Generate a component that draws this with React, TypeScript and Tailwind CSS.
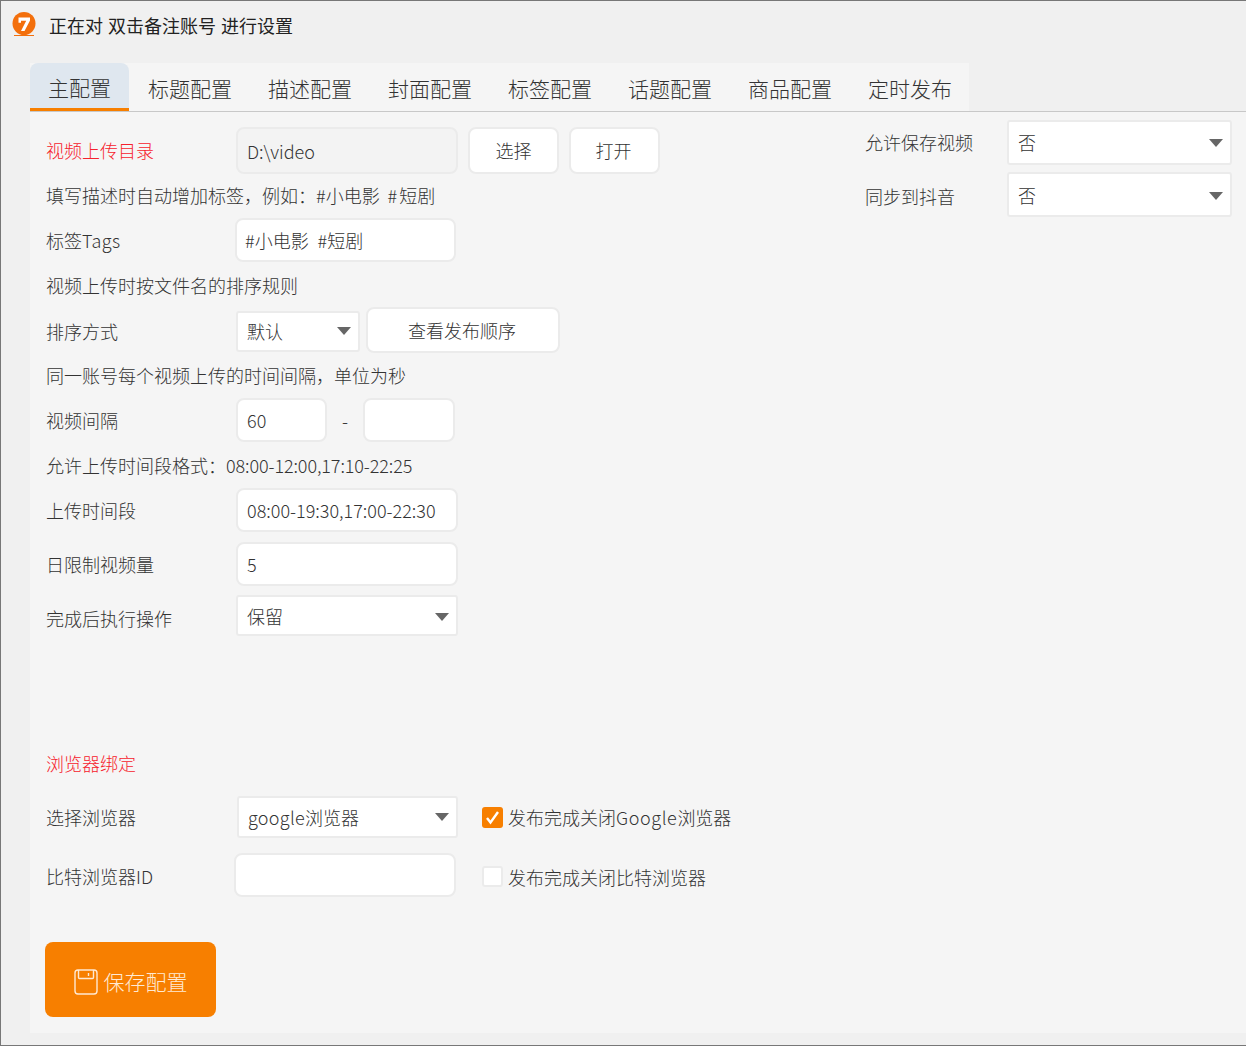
import type { ReactNode } from 'react';

const tabs = ['主配置', '标题配置', '描述配置', '封面配置', '标签配置', '话题配置', '商品配置', '定时发布'];

const fieldClass =
  'h-full rounded-lg border-2 border-[#ebebeb] pl-[9px] pr-[8px] text-[18px] font-light text-[#333333] outline-none';

function Caret() {
  return (
    <svg width="16" height="10" viewBox="0 0 16 10" className="shrink-0">
      <path d="M1 1h14L8 9z" fill="#666666" />
    </svg>
  );
}

function Select({ value, className }: { value: ReactNode; className: string }) {
  return (
    <div
      className={`flex items-center justify-between rounded-[3px] border-2 border-[#ebebeb] bg-white pl-[9px] pr-[6px] text-[18px] font-light text-[#333333] ${className}`}
    >
      <span>{value}</span>
      <Caret />
    </div>
  );
}

function Button({ label, className }: { label: string; className: string }) {
  return (
    <button className={`h-full rounded-lg border-2 border-[#ebebeb] bg-white text-[18px] font-light text-[#333333] ${className}`}>
      {label}
    </button>
  );
}

function Hint({ children, className }: { children?: ReactNode; className: string }) {
  return <div className={`flex h-6 items-center whitespace-pre pb-[2px] text-[18px] font-light text-[#333333] ${className}`}>{children}</div>;
}

function Label({ children, red, className = '' }: { children: ReactNode; red?: boolean; className?: string }) {
  return (
    <div className={`w-[191px] shrink-0 pl-px text-[18px] font-light ${red ? 'text-[#f5222d]' : 'text-[#333333]'} ${className}`}>
      {children}
    </div>
  );
}

function Logo() {
  return (
    <svg width="26" height="26" viewBox="0 0 26 26" className="shrink-0">
      <circle cx="12" cy="11.5" r="11.5" fill="#f36f0c" />
      <path d="M2 23.5h20" stroke="#f36f0c" strokeWidth="1" />
      <path d="M6.5 5.5H18v3L12.5 19H9l5.2-10.2H9v2H6.5z" fill="#ffffff" />
    </svg>
  );
}

function SaveIcon() {
  return (
    <svg width="24" height="26" viewBox="0 0 24 26" fill="none" stroke="#ffe9d2" strokeWidth="1.4" className="shrink-0">
      <rect x="1" y="1" width="22" height="24" rx="3" />
      <path d="M4.5 1v7.5a1 1 0 0 0 1 1h13a1 1 0 0 0 1-1V1" />
      <path d="M14.5 4v3" />
    </svg>
  );
}

export default function App() {
  return (
    <div className="h-[1046px] w-[1246px] overflow-hidden border-b border-l border-t border-[#777777] bg-[#f0f0f0] font-['Noto_Sans_CJK_SC',sans-serif]">
      <div className="flex h-[62px] items-start pl-[11px] pt-[11px]">
        <Logo />
        <span className="ml-[11px] text-[18px] leading-[26px] text-[#222222] [word-spacing:1px]">正在对 双击备注账号 进行设置</span>
      </div>

      <div className="ml-[29px] h-[970px] bg-[#f5f5f5]">
        <div className="relative flex h-[49px] border-b border-[#c8c8c8] bg-[#f0f0f0]">
          <div className="flex bg-[#f5f5f5]">
            {tabs.map((tab, i) => (
              <div
                key={tab}
                className={`flex h-[48px] items-center pt-[4px] text-[21px] font-light text-[#333333] ${
                  i === 0 ? 'rounded-t-lg border-b-[3px] border-[#f77f00] bg-[#dfe7ef] px-[18px]' : 'pl-[19px] pr-[17px]'
                }`}
              >
                {tab}
              </div>
            ))}
          </div>
        </div>

        <div className="flex">
          <div className="w-[835px] shrink-0 pl-[15px]">
            <div className="mt-[15px] flex h-[47px] items-center">
              <Label red>视频上传目录</Label>
              <input readOnly defaultValue="D:\video" className={`${fieldClass} h-[45px] w-[222px] bg-[#f3f3f3]`} />
              <Button label="选择" className="ml-[10px] w-[91px]" />
              <Button label="打开" className="ml-[10px] w-[91px] pr-[2px]" />
            </div>
            <Hint className="mt-[10px] pl-px [word-spacing:4px]">
              填写描述时自动增加标签，例如：#小电影 <span className="tracking-[2px]">#</span>短剧
            </Hint>
            <div className="mt-[10px] flex h-[44px] items-center">
              <Label>
                标签<span className="tracking-[0.5px]">Tags</span>
              </Label>
              <input readOnly defaultValue="#小电影 #短剧" className={`${fieldClass} -ml-px w-[221px] bg-white !pl-[8px] [word-spacing:5px]`} />
            </div>
            <Hint className="mt-[12px] pl-px">视频上传时按文件名的排序规则</Hint>
            <div className="mt-[9px] flex h-[46px] items-center">
              <Label className="pt-[2px]">排序方式</Label>
              <Select value="默认" className="mt-[2px] h-[41px] w-[124px]" />
              <Button label="查看发布顺序" className="ml-[6px] w-[194px] pr-[2px]" />
            </div>
            <Hint className="mt-[11px] pl-px">同一账号每个视频上传的时间间隔，单位为秒</Hint>
            <div className="mt-[10px] flex h-[44px] items-center">
              <Label>视频间隔</Label>
              <input readOnly defaultValue="60" className={`${fieldClass} w-[91px] bg-white`} />
              <span className="w-[36px] text-center text-[18px] font-light text-[#333333]">-</span>
              <input readOnly className={`${fieldClass} w-[92px] bg-white`} />
            </div>
            <Hint className="mt-[12px] pl-px">
              允许上传时间段格式：<span className="tracking-[-0.1px]">08:00-12:00,17:10-22:25</span>
            </Hint>
            <div className="mt-[10px] flex h-[44px] items-center">
              <Label>上传时间段</Label>
              <input readOnly defaultValue="08:00-19:30,17:00-22:30" className={`${fieldClass} w-[222px] bg-white`} />
            </div>
            <div className="mt-[10px] flex h-[44px] items-center">
              <Label>日限制视频量</Label>
              <input readOnly defaultValue="5" className={`${fieldClass} w-[222px] bg-white`} />
            </div>
            <div className="mt-[9px] flex h-[41px] items-center">
              <Label className="pt-[6px]">完成后执行操作</Label>
              <Select value="保留" className="h-[41px] w-[222px] pt-[2px]" />
            </div>
            <div className="h-[116px]" />
            <Hint className="pl-px !text-[#f5222d]">浏览器绑定</Hint>
            <div className="mt-[20px] flex h-[42px] items-center">
              <Label>选择浏览器</Label>
              <Select
                value={
                  <>
                    <span className="tracking-[0.3px]">google</span>浏览器
                  </>
                }
                className="ml-px h-[42px] w-[221px]"
              />
              <div className="ml-[24px] flex h-[21px] w-[21px] items-center justify-center rounded-[3px] bg-[#f77f00]">
                <svg width="15" height="15" viewBox="0 0 15 15" fill="none" stroke="#ffffff" strokeWidth="2.4">
                  <path d="M2 8l3.5 4.5L13 2" />
                </svg>
              </div>
              <span className="ml-[5px] text-[18px] font-light text-[#333333]">
                发布完成关闭<span className="tracking-[0.6px]">Google</span>浏览器
              </span>
            </div>
            <div className="mt-[15px] flex h-[44px] items-center">
              <Label className="pt-[3px]">比特浏览器ID</Label>
              <input readOnly className={`${fieldClass} -ml-[2px] w-[222px] bg-white`} />
              <div className="ml-[26px] mt-[3px] h-[21px] w-[21px] rounded-[3px] border-2 border-[#ebebeb] bg-white" />
              <span className="ml-[5px] mt-[4px] text-[18px] font-light text-[#333333]">发布完成关闭比特浏览器</span>
            </div>
            <button className="mt-[45px] flex h-[75px] w-[171px] items-center justify-center gap-[6px] rounded-lg bg-[#f77f00] pt-[4px] text-[21px] font-light text-[#ffe9d2]">
              <SaveIcon />
              保存配置
            </button>
          </div>

          <div className="flex-1 pt-[8px]">
            <div className="flex h-[45px] items-center">
              <div className="w-[142px] shrink-0 text-[18px] font-light text-[#333333]">允许保存视频</div>
              <Select value="否" className="h-[45px] w-[225px]" />
            </div>
            <div className="mt-[7px] flex h-[45px] items-center">
              <div className="w-[142px] shrink-0 pt-[4px] text-[18px] font-light text-[#333333]">同步到抖音</div>
              <Select value="否" className="h-[45px] w-[225px] pt-[2px]" />
            </div>
          </div>
        </div>
      </div>
    </div>
  );
}
